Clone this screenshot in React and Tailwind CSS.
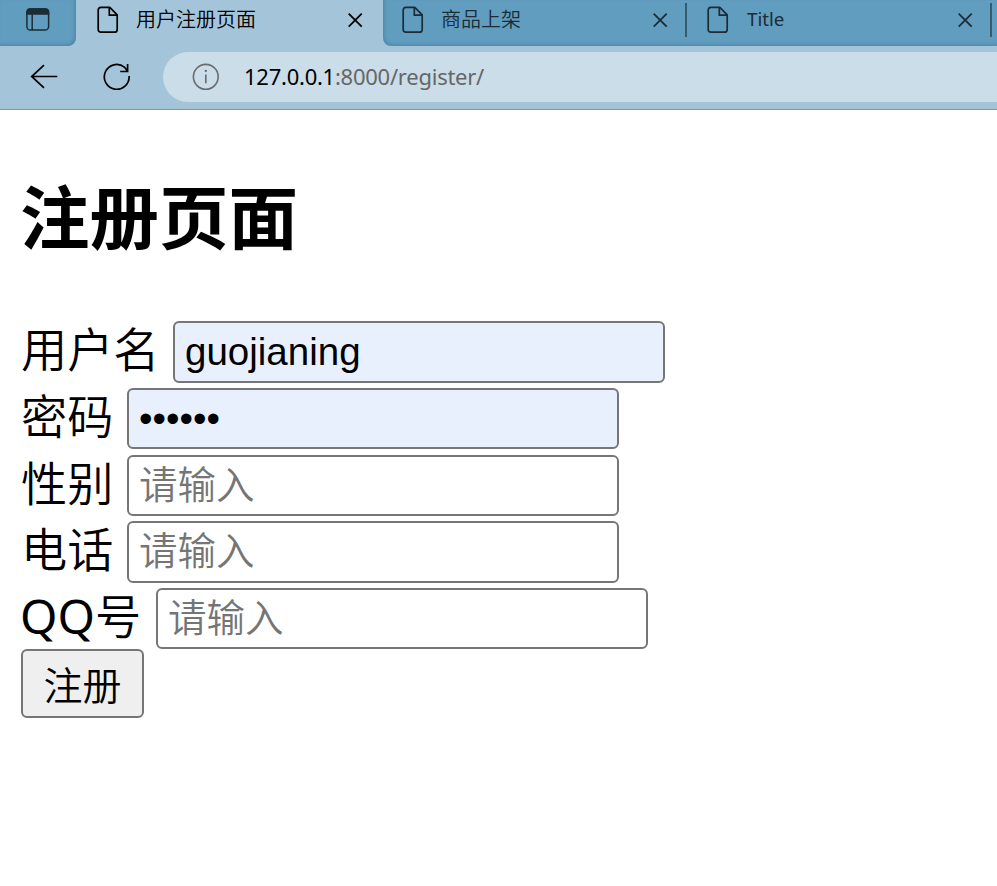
import React from "react";

const cjk = "font-['Noto_Sans_CJK_SC',sans-serif]";

function PageIcon() {
  return (
    <svg className="block h-7 w-[22px] shrink-0" viewBox="0 0 22 28" fill="none" stroke="currentColor" strokeWidth="1.7" strokeLinejoin="round">
      <path d="M4 1.3H12.8L20.2 8.8V23.4Q20.2 26.2 17.4 26.2H4Q1.2 26.2 1.2 23.4V4.1Q1.2 1.3 4 1.3Z" />
      <path d="M12.3 1.5V9.2H20" />
    </svg>
  );
}

function CloseIcon() {
  return (
    <svg className="block h-4 w-4 shrink-0" viewBox="0 0 16 16" fill="none" stroke="currentColor" strokeWidth="1.8">
      <path d="M1.7 1.6L14.7 14.6M14.7 1.6L1.7 14.6" />
    </svg>
  );
}

function Tab({ title, latin }) {
  return (
    <div className="flex h-[39px] w-[266px] shrink-0 items-center">
      <PageIcon />
      <span className={latin ? "ml-[18px] h-[39px] flex-1 font-['Noto_Sans',sans-serif] text-[18.7px] leading-[38px]" : "ml-[17px] h-[39px] flex-1 font-['Noto_Sans_CJK_SC',sans-serif] text-[20px] font-[350] leading-[37px]"}>{title}</span>
      <CloseIcon />
    </div>
  );
}

function Browser() {
  return (
    <header className="h-[110px] w-full overflow-hidden border-b border-[#789bae] bg-[#a4c5d9]">
      <div className="flex h-[46px]">
        <div className="h-[46px] w-[76px] shrink-0 rounded-br-lg bg-[#619dbf] pl-[26px] pt-2 text-[#1b2c35] shadow-[inset_-2px_-2px_3px_rgba(40,90,120,0.25)]">
          <svg className="block h-[23px] w-6" viewBox="0 0 24 23" fill="none" stroke="currentColor" strokeWidth="1.5">
            <rect x="0.9" y="0.9" width="21.7" height="21.2" rx="3.6" />
            <path d="M1 6V4Q1 1 4 1H19.5Q22.5 1 22.5 4V6Z" fill="currentColor" />
            <path d="M6.2 6V22" />
          </svg>
        </div>
        <div className="w-[307px] shrink-0 pl-[21px] text-black">
          <Tab title="用户注册页面" />
        </div>
        <div className="flex h-[46px] w-[614px] shrink-0 overflow-hidden rounded-bl-lg bg-[#619dbf] pl-[19px] text-[#1b2c35] shadow-[inset_2px_-2px_3px_rgba(40,90,120,0.25)]">
          <Tab title="商品上架" />
          <div className="ml-[17px] mt-[3px] h-[34px] w-[2px] shrink-0 bg-[#365a6e]" />
          <div className="w-5 shrink-0" />
          <Tab title="Title" latin />
          <div className="ml-[17px] mt-[3px] h-[34px] w-[2px] shrink-0 bg-[#365a6e]" />
        </div>
      </div>
      <div className="flex h-[63px] pt-[6px]">
        <svg className="ml-[30px] mt-3 block h-[26px] w-7 shrink-0" viewBox="0 0 28 26" fill="none" stroke="#000" strokeWidth="1.7">
          <path d="M27.3 12.5H1.5M14 1.2L1.7 12.5L14 23.8" />
        </svg>
        <svg className="ml-[45px] mt-[11px] block h-7 w-7 shrink-0" viewBox="0 0 28 28" fill="none" stroke="#000" strokeWidth="1.7">
          <path d="M26.1 13A12.4 12.4 0 1 1 21.4 4.1L24.6 8.3M24.6 1V8.5H17.2" />
        </svg>
        <div className="ml-8 flex h-[50px] flex-1 items-center rounded-l-full bg-[#cadde8] pl-[29px]">
          <svg className="block h-7 w-7 shrink-0" viewBox="0 0 28 28" fill="none" stroke="#686c6f" strokeWidth="1.6">
            <circle cx="13.8" cy="13.8" r="12.4" />
            <path d="M13.8 11.5V20.2" />
            <circle cx="13.8" cy="8" r="1.15" fill="#686c6f" stroke="none" />
          </svg>
          <span className="mb-[2px] ml-6 whitespace-nowrap font-['Noto_Sans',sans-serif] text-[22px] tracking-[-0.25px] text-[#666]">
            <span className="text-black">127.0.0.1</span>:8000/register/
          </span>
        </div>
      </div>
    </header>
  );
}

function Field({ label, filled, height, gap, width, ...input }) {
  return (
    <div className={"flex items-start " + gap}>
      <label className={"h-[52px] shrink-0 whitespace-nowrap font-['Noto_Sans_CJK_SC',sans-serif] text-[46.2px] font-[350] leading-[51px] " + width}>{label}</label>
      <input
        {...input}
        className={
          "block w-[492px] rounded-md border-2 border-[#767676] px-[10px] font-['Liberation_Sans','Noto_Sans_CJK_SC',sans-serif] text-[38.5px] font-[350] text-black outline-none placeholder:text-[#757575] " +
          height + (filled ? " bg-[#e8f0fe]" : " bg-white")
        }
      />
    </div>
  );
}

export default function App() {
  return (
    <div className="h-[886px] w-full overflow-hidden bg-white text-black">
      <Browser />
      <main className="pl-[21px] pt-[56px]">
        <h1 className={cjk + " -ml-px h-[155px] text-[69.5px] font-bold leading-[95px]"}>注册页面</h1>
        <form>
          <Field label="用户名" filled defaultValue="guojianing" width="w-[152px]" height="h-[62px]" gap="mb-[5px]" />
          <Field label="密码" filled type="password" defaultValue="123456" width="w-[106px]" height="h-[61px]" gap="mb-[6px]" />
          <Field label="性别" placeholder="请输入" width="w-[106px]" height="h-[61px]" gap="mb-[5px]" />
          <Field label="电话" placeholder="请输入" width="w-[106px]" height="h-[62px]" gap="mb-[5px]" />
          <Field
            label={<><span className="-ml-px font-['Noto_Sans',sans-serif] text-[48px] font-normal">QQ</span>号</>}
            placeholder="请输入"
            width="w-[135px]"
            height="h-[61px]"
            gap=""
          />
          <button type="button" className={cjk + " block h-[69px] w-[123px] rounded-md border-2 border-[#767676] bg-[#efefef] text-[39px] font-[350] leading-[65px]"}>注册</button>
        </form>
      </main>
    </div>
  );
}
